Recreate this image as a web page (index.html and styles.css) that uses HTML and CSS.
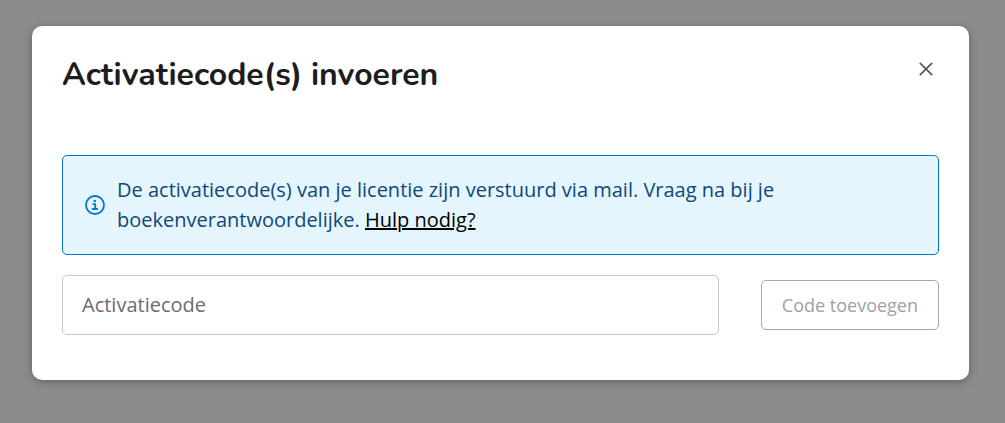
FILE: index.html
```html
<!DOCTYPE html>
<html lang="nl">
<head>
  <meta charset="UTF-8" />
  <meta name="viewport" content="width=device-width, initial-scale=1.0" />
  <title>Activatiecode(s) invoeren</title>
  <link rel="stylesheet" href="styles.css">
</head>
<body>
  <div class="modal" role="dialog" aria-modal="true" aria-labelledby="modalTitle">
    <header class="modal-header">
      <h1 id="modalTitle">Activatiecode(s) invoeren</h1>
      <button class="close-btn" type="button" aria-label="Sluiten">
        <svg width="14" height="14" viewBox="0 0 14 14" fill="none" stroke="currentColor" stroke-width="1.7" stroke-linecap="round">
          <path d="M1.3 1.3l11.4 11.4M12.7 1.3L1.3 12.7" />
        </svg>
      </button>
    </header>

    <div class="info">
      <svg class="info-icon" width="20" height="20" viewBox="0 0 20 20" fill="none" stroke="currentColor">
        <circle cx="10" cy="10" r="9" stroke-width="1.8" />
        <circle cx="9.8" cy="6" r="1.3" fill="currentColor" stroke="none" />
        <path d="M8.2 9.2h2v4.5M7.7 14h4.6" stroke-width="1.8" stroke-linecap="round" stroke-linejoin="round" />
      </svg>
      <p>De activatiecode(s) van je licentie zijn verstuurd via mail. Vraag na bij je boekenverantwoordelijke. <a href="#">Hulp nodig?</a></p>
    </div>

    <form class="code-form">
      <input class="code-input" type="text" placeholder="Activatiecode" aria-label="Activatiecode">
      <button class="add-btn" type="submit" disabled>Code toevoegen</button>
    </form>
  </div>
</body>
</html>
```
FILE: styles.css
```css
* {
  box-sizing: border-box;
}
body {
  margin: 0;
  padding: 26px 36px 26px 32px;
  background-color: #8c8c8c;
  font-family: "Open Sans", sans-serif;
  font-size: 20px;
  line-height: 30px;
}
.modal {
  padding: 30px 30px 45px;
  background: white;
  border-radius: 10px;
  box-shadow: 0 2px 8px rgba(0, 0, 0, 0.3);
}
.modal-header {
  display: flex;
  justify-content: space-between;
  align-items: flex-start;
  margin-bottom: 61px;
}
h1 {
  margin: 0;
  color: #1d1d1d;
  font-family: Nunito, "Open Sans", sans-serif;
  font-size: 32px;
  font-weight: 700;
  line-height: 38px;
}
.close-btn {
  display: flex;
  padding: 6px;
  border: none;
  background: none;
  color: #555;
  cursor: pointer;
}
.info {
  display: flex;
  align-items: center;
  gap: 12px;
  margin-bottom: 20px;
  padding: 19px 22px;
  border: 1px solid #0077c8;
  border-radius: 5px;
  background-color: #e4f5fe;
  color: #0f477b;
}
.info-icon {
  flex-shrink: 0;
  color: #0077cc;
}
.info p {
  margin: 0;
}
.info a {
  color: black;
}
.code-form {
  display: flex;
  align-items: center;
  gap: 42px;
}
.code-input {
  flex: 1;
  min-width: 0;
  height: 60px;
  padding: 0 19px 2px;
  border: 1px solid #c8c8c8;
  border-radius: 5px;
  color: #1d1d1d;
  font: inherit;
}
.code-input::placeholder {
  color: #6c6c6c;
}
.add-btn {
  height: 50px;
  padding: 0 20px;
  border: 1px solid #a8a8a8;
  border-radius: 5px;
  background: white;
  color: #a0a0a0;
  font-family: inherit;
  font-size: 18px;
  font-weight: 500;
}
```
